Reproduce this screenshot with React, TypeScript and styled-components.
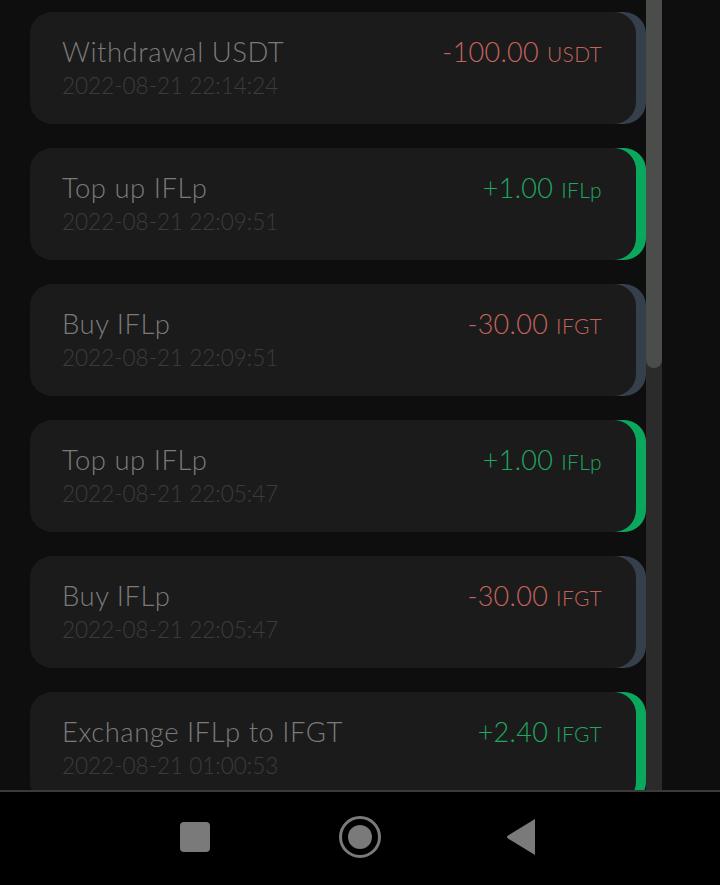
import React from "react";
import { styled, createGlobalStyle } from "styled-components";

const Global = createGlobalStyle`
  html, body {
    margin: 0;
    padding: 0;
    background: #0e0e0e;
    font-family: "Lato", "Noto Sans", sans-serif;
  }
`;

const Screen = styled.div`
  display: flex;
  flex-direction: column;
  width: 720px;
  height: 885px;
  overflow: hidden;
  background: #0e0e0e;
`;

const Content = styled.div`
  display: flex;
  height: 790px;
  flex: 0 0 790px;
`;

const List = styled.div`
  display: flex;
  flex-direction: column;
  gap: 24px;
  width: 616px;
  padding: 12px 0 0 30px;
  overflow: hidden;
`;

// outer shell carries the accent colour; it peeks out on the right edge
const Card = styled.div<{ $accent: string }>`
  display: flex;
  flex: 0 0 112px;
  padding-right: 10px;
  background: linear-gradient(to right, transparent 50%, ${(p) => p.$accent} 50%);
  border-radius: 22px;
`;

const Body = styled.div`
  flex: 1;
  display: flex;
  justify-content: space-between;
  box-sizing: border-box;
  padding: 23px 34px 0 32px;
  background: #1b1b1b;
  border-radius: 22px;
`;

const Info = styled.div`
  display: flex;
  flex-direction: column;
  gap: 3px;
`;

const Title = styled.div`
  font-size: 27.5px;
  font-weight: 300;
  line-height: 34px;
  letter-spacing: 0.5px;
  color: #7a7a7a;
`;

const Stamp = styled.div`
  font-size: 22.5px;
  font-weight: 300;
  line-height: 28px;
  color: #3c3c3c;
`;

const Amount = styled.div<{ $color: string }>`
  font-size: 27px;
  font-weight: 300;
  line-height: 34px;
  letter-spacing: 0.3px;
  color: ${(p) => p.$color};
  white-space: nowrap;
`;

const Unit = styled.span`
  font-size: 21px;
  margin-left: 8px;
`;

const Track = styled.div`
  flex: 0 0 16px;
  display: flex;
  flex-direction: column;
  background: #2a2b2a;
`;

const Thumb = styled.div`
  height: 368px;
  background: #4b4d4b;
  border-radius: 0 0 8px 8px;
`;

const NavBar = styled.div`
  flex: 1;
  display: flex;
  align-items: center;
  justify-content: center;
  gap: 121px;
  background: #000;
  border-top: 2px solid #3a3a3a;
  padding-bottom: 3px;
`;

const NavButton = styled.div`
  width: 44px;
  height: 44px;
  display: flex;
  align-items: center;
  justify-content: center;
`;

const RED = "#c4635b";
const GREEN = "#1fa862";
const STRIP_GREEN = "#0aa85c";
const STRIP_GRAY = "#36404c";

const rows = [
  { title: "Withdrawal USDT", time: "2022-08-21 22:14:24", value: "-100.00", unit: "USDT", up: false },
  { title: "Top up IFLp", time: "2022-08-21 22:09:51", value: "+1.00", unit: "IFLp", up: true },
  { title: "Buy IFLp", time: "2022-08-21 22:09:51", value: "-30.00", unit: "IFGT", up: false },
  { title: "Top up IFLp", time: "2022-08-21 22:05:47", value: "+1.00", unit: "IFLp", up: true },
  { title: "Buy IFLp", time: "2022-08-21 22:05:47", value: "-30.00", unit: "IFGT", up: false },
  { title: "Exchange IFLp to IFGT", time: "2022-08-21 01:00:53", value: "+2.40", unit: "IFGT", up: true },
];

const App = () => {
  return (
    <Screen>
      <Global />
      <Content>
        <List>
          {rows.map((r, i) => (
            <Card key={i} $accent={r.up ? STRIP_GREEN : STRIP_GRAY}>
              <Body>
                <Info>
                  <Title>{r.title}</Title>
                  <Stamp>{r.time}</Stamp>
                </Info>
                <Amount $color={r.up ? GREEN : RED}>
                  {r.value}
                  <Unit>{r.unit}</Unit>
                </Amount>
              </Body>
            </Card>
          ))}
        </List>
        <Track>
          <Thumb />
        </Track>
      </Content>
      <NavBar>
        <NavButton>
          <svg width="30" height="30" viewBox="0 0 30 30">
            <rect x="0" y="0" width="30" height="30" rx="4" fill="#7a7a7a" />
          </svg>
        </NavButton>
        <NavButton>
          <svg width="44" height="44" viewBox="0 0 44 44">
            <circle cx="22" cy="22" r="19.5" fill="none" stroke="#7a7a7a" strokeWidth="3" />
            <circle cx="22" cy="22" r="12" fill="#7a7a7a" />
          </svg>
        </NavButton>
        <NavButton>
          <svg width="30" height="36" viewBox="0 0 30 36" style={{ marginLeft: -8 }}>
            <path d="M29 0 L29 36 L2 19.5 Q0 18 2 16.5 Z" fill="#7a7a7a" />
          </svg>
        </NavButton>
      </NavBar>
    </Screen>
  );
};

export default App;
